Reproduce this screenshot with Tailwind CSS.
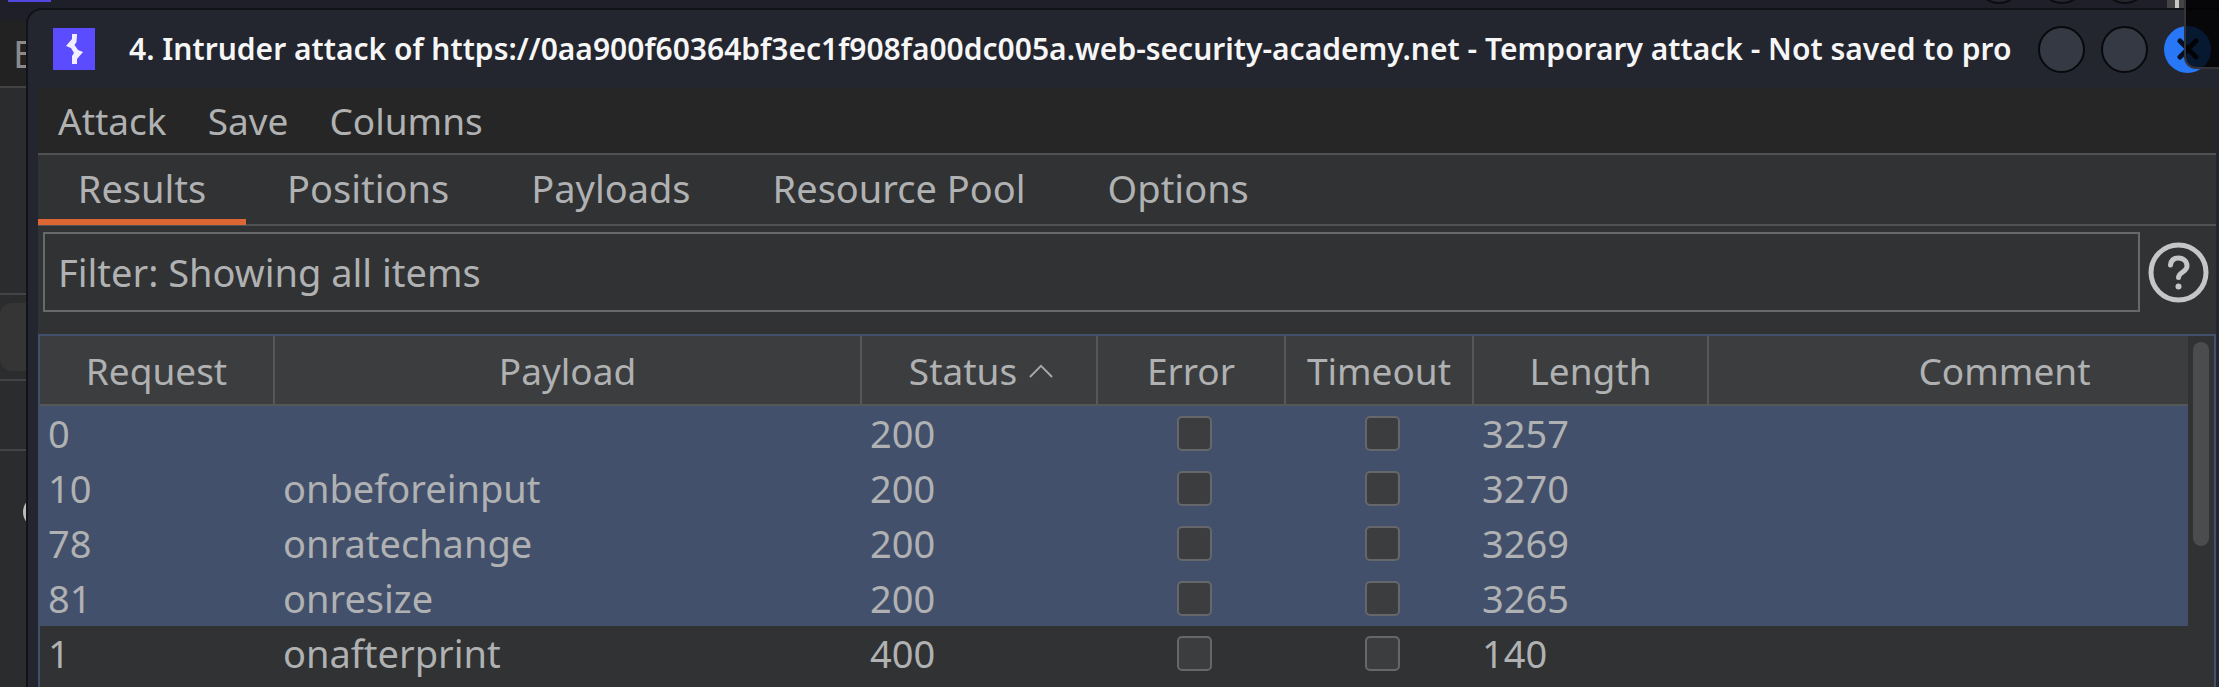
<!DOCTYPE html>
<html lang="en">
<head>
<meta charset="utf-8">
<title>Intruder attack</title>
<script src="https://cdn.jsdelivr.net/npm/@tailwindcss/browser@4"></script>
</head>
<body class="relative h-screen overflow-hidden bg-[#2b2c2d] font-['Noto_Sans',sans-serif] text-[38px] text-[#b0b1b2]">

<!-- Parent window, showing behind the dialog -->
<div class="absolute inset-0 flex flex-col" aria-hidden="true">
  <div class="h-[20px] bg-[#1f1f29]"></div>
  <div class="h-[66px] bg-[#222222] pl-[13px] leading-[66px] text-[#8a8a8a]">E</div>
  <div class="h-[207px] border-t-2 border-[#444444]"></div>
  <div class="flex h-[86px] items-center border-t-2 border-[#434445]"><div class="h-[68px] w-[60px] rounded-l-xl bg-[#353535]"></div></div>
  <div class="h-[70px] border-t-2 border-[#434445]"></div>
  <div class="flex-1 border-t-2 border-[#434445] pt-[45px] pl-[23px]"><div class="size-8 rounded-full border-3 border-[#bbbbbb]"></div></div>
</div>
<div class="absolute top-0 left-[8px] h-[2px] w-[43px] bg-[#5048e0]" aria-hidden="true"></div>
<div class="absolute -top-[42px] right-[71px] flex gap-[17px]" aria-hidden="true">
  <div class="size-[46px] rounded-full border-2 border-[#0c0d12] bg-[#25262f]"></div>
  <div class="size-[46px] rounded-full border-2 border-[#0c0d12] bg-[#25262f]"></div>
  <div class="size-[46px] rounded-full border-2 border-[#0c0d12] bg-[#25262f]"></div>
</div>
<div class="absolute top-0 right-[34px] h-[8px] w-[18px] border-r-6 border-l-8 border-[#444444] bg-[#c8c8c8]" aria-hidden="true"></div>

<!-- Attack window -->
<main class="absolute top-[8px] right-0 bottom-0 left-[26px] flex flex-col rounded-tl-2xl border-t-2 border-l-2 border-[#121319] bg-[#23252f] pr-[3px] pl-[10px]">
  <header class="flex h-[78px] shrink-0 items-center pl-[15px]">
    <svg class="h-[42px] w-[42px] shrink-0" viewBox="0 0 42 42" aria-hidden="true">
      <rect width="42" height="42" fill="#5b4dff"/>
      <path d="M19 6 L24 6 L23.500 14 L21.500 17 L25 22 L30 24 L24 31 L24 36 L19 36 L19 28 L21 25 L18 20 L13 18 L19 11 Z" fill="#f1efff"/>
    </svg>
    <h1 class="ml-[34px] min-w-0 flex-1 text-[30px] leading-[48px] font-semibold whitespace-nowrap text-[#f6f6f6]">4. Intruder attack of https://0aa900f60364bf3ec1f908fa00dc005a.web-security-academy.net - Temporary attack - Not saved to pro</h1>
    <div class="mr-[5px] ml-[14px] flex shrink-0 gap-[16px]">
      <button type="button" aria-label="Minimize" class="size-[47px] rounded-full border-2 border-[#08090c] bg-[#353944]"></button>
      <button type="button" aria-label="Maximize" class="size-[47px] rounded-full border-2 border-[#08090c] bg-[#353944]"></button>
      <button type="button" aria-label="Close" class="flex size-[47px] items-center justify-center rounded-full bg-[#2777f6]">
        <svg class="size-[22px]" viewBox="0 0 22 22" fill="none" stroke="#07101f" stroke-width="5" stroke-linecap="round"><path d="M3 3 L19 19 M19 3 L3 19"/></svg>
      </button>
    </div>
  </header>

  <div class="flex min-h-0 flex-1 flex-col bg-[#313234]">
    <nav aria-label="Menu" class="flex h-[65px] shrink-0 items-center gap-[41px] bg-[#262626] pl-[20px] text-[37px]">
      <button type="button">Attack</button>
      <button type="button">Save</button>
      <button type="button">Columns</button>
    </nav>

    <div role="tablist" class="flex h-[73px] shrink-0 border-y-2 border-[#505152]">
      <button type="button" role="tab" aria-selected="true" class="-mb-[1px] w-[208px] border-b-6 border-[#dc6733] pt-[3px]">Results</button>
      <button type="button" role="tab" aria-selected="false" class="px-[41px] pb-[2px]">Positions</button>
      <button type="button" role="tab" aria-selected="false" class="px-[41px] pb-[2px]">Payloads</button>
      <button type="button" role="tab" aria-selected="false" class="px-[41px] pb-[2px]">Resource Pool</button>
      <button type="button" role="tab" aria-selected="false" class="px-[41px] pb-[2px]">Options</button>
    </div>

    <div class="flex shrink-0 items-center gap-[8px] pt-[6px] pr-[7px] pb-[22px] pl-[5px]">
      <input type="text" readonly aria-label="Filter" value="Filter: Showing all items" class="h-[80px] min-w-0 flex-1 border-2 border-[#686a6a] bg-transparent px-[13px] outline-none">
      <button type="button" aria-label="Help" class="shrink-0">
        <svg class="size-[61px]" viewBox="0 0 61 61" fill="none" stroke="#c5c6c7" stroke-width="5">
          <circle cx="30.500" cy="30.500" r="27.500"/>
          <path stroke-linecap="round" d="M22.500 23 C23 18.500 26 16 30.500 16 C35.500 16 39 19.500 39 24 C39 30 30.500 30.500 30.500 35.500"/>
          <circle cx="30.500" cy="44.500" r="3" fill="#c5c6c7" stroke="none"/>
        </svg>
      </button>
    </div>

    <div class="flex min-h-0 flex-1 overflow-hidden border-2 border-b-0 border-[#42506c]">
      <div class="min-w-0 flex-1 overflow-hidden">
        <table class="w-[calc(100%+112px)] table-fixed border-separate border-spacing-0 text-left">
          <colgroup><col class="w-[235px]"><col class="w-[587px]"><col class="w-[236px]"><col class="w-[188px]"><col class="w-[188px]"><col class="w-[235px]"><col></colgroup>
          <thead>
            <tr class="h-[70px] bg-[#3c3d3f] text-center text-[37px] *:border-b-2 *:border-[#565758] *:p-0 *:pt-[2px] *:font-normal">
              <th class="border-r-2">Request</th>
              <th class="border-r-2">Payload</th>
              <th class="border-r-2" aria-sort="ascending"><span class="flex items-center justify-center gap-[12px] pl-[4px]">Status<svg class="h-[14px] w-[24px]" viewBox="0 0 26 15" fill="none" stroke="#a8a9aa" stroke-width="2"><path d="M1 14 L13 2 L25 14"/></svg></span></th>
              <th class="border-r-2">Error</th>
              <th class="border-r-2">Timeout</th>
              <th class="border-r-2">Length</th>
              <th>Comment</th>
            </tr>
          </thead>
          <tbody id="rows"></tbody>
        </table>
      </div>
      <div class="w-[26px] shrink-0 pt-[6px] pl-[5px]" aria-hidden="true"><div class="h-[204px] w-[16px] rounded-full bg-[#4b4c4e]"></div></div>
    </div>
  </div>
</main>

<!-- Translucent panel over the top right corner -->
<div class="absolute top-0 right-0 h-[69px] w-[35px] rounded-bl-xl border-b-2 border-l-2 border-[#33343a] bg-black/80" aria-hidden="true"></div>

<script>
  const rows = [
    ["0", "", "200", "3257", true],
    ["10", "onbeforeinput", "200", "3270", true],
    ["78", "onratechange", "200", "3269", true],
    ["81", "onresize", "200", "3265", true],
    ["1", "onafterprint", "400", "140", false]
  ];
  const box = (label) => `<td class="p-0 pl-[4px]"><input type="checkbox" aria-label="${label}" class="mx-auto block size-[35px] appearance-none rounded-[5px] border-2 border-[#66676a] bg-[#3c3d3f]"></td>`;
  document.getElementById("rows").innerHTML = rows.map(([id, payload, status, length, selected]) =>
    `<tr class="h-[55px] ${selected ? "bg-[#42506c]" : ""}">
      <td class="p-0 pl-[8px] leading-[55px]">${id}</td>
      <td class="p-0 pl-[8px] leading-[55px]">${payload}</td>
      <td class="p-0 pl-[8px] leading-[55px]">${status}</td>
      ${box("Error, request " + id)}
      ${box("Timeout, request " + id)}
      <td class="p-0 pl-[8px] leading-[55px]">${length}</td>
      <td class="p-0"></td>
    </tr>`).join("");
</script>
</body>
</html>
